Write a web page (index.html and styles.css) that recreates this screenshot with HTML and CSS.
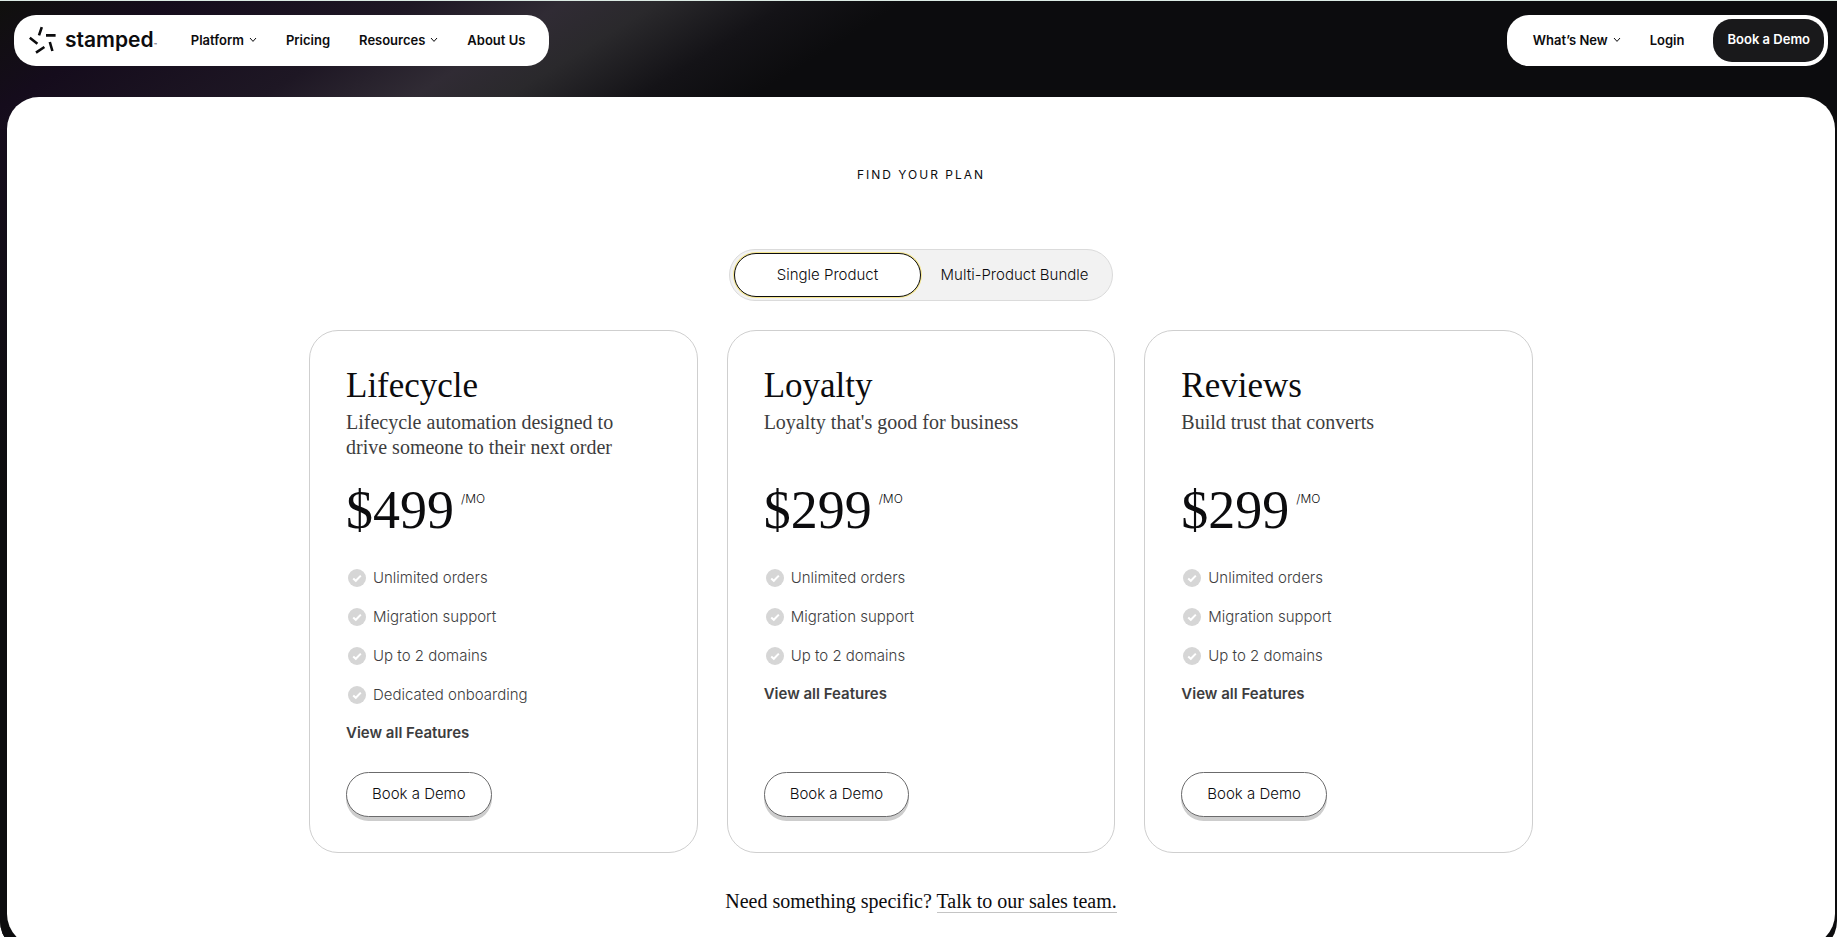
FILE: index.html
```
<!DOCTYPE html>
<html lang="en">
<head>
    <meta charset="utf-8">
    <title>Stamped Pricing</title>
    <link rel="stylesheet" href="styles.css">
</head>
<body>
    <div class="page">
        <header class="header">
            <nav class="nav nav-main">
                <a href="#" class="logo">
                    <svg class="logo-mark" viewBox="0 0 28 28" aria-hidden="true">
                        <path d="M12.8 1.2 L10 9.4 M17 9.4 H26.6 M0.8 11.8 L8.4 17.8 M20.8 16 L23.4 25 M7 26.6 L15.4 21" />
                    </svg>
                    <span class="logo-text">stamped<span class="logo-tm">&trade;</span></span>
                </a>
                <a href="#" class="nav-link">Platform
                    <svg class="chevron" viewBox="0 0 8 6" aria-hidden="true"><path d="M1 1 L4 4.4 L7 1" /></svg>
                </a>
                <a href="#" class="nav-link">Pricing</a>
                <a href="#" class="nav-link">Resources
                    <svg class="chevron" viewBox="0 0 8 6" aria-hidden="true"><path d="M1 1 L4 4.4 L7 1" /></svg>
                </a>
                <a href="#" class="nav-link">About Us</a>
            </nav>
            <nav class="nav nav-side">
                <a href="#" class="nav-link">What’s New
                    <svg class="chevron" viewBox="0 0 8 6" aria-hidden="true"><path d="M1 1 L4 4.4 L7 1" /></svg>
                </a>
                <a href="#" class="nav-link">Login</a>
                <a href="#" class="nav-cta">Book a Demo</a>
            </nav>
        </header>

        <main class="panel">
            <p class="eyebrow">Find your plan</p>

            <div class="toggle">
                <button type="button" class="toggle-btn active">Single Product</button>
                <button type="button" class="toggle-btn">Multi-Product Bundle</button>
            </div>

            <div class="cards">
                <section class="card">
                    <h2 class="card-title">Lifecycle</h2>
                    <p class="card-text">Lifecycle automation designed to drive someone to their next order</p>
                    <p class="price">$499<span class="per">/MO</span></p>
                    <ul class="features">
                        <li><svg class="check" viewBox="0 0 18 18" aria-hidden="true"><circle cx="9" cy="9" r="9" /><path d="M5.2 9.4 L7.8 11.8 L12.8 6.6" /></svg>Unlimited orders</li>
                        <li><svg class="check" viewBox="0 0 18 18" aria-hidden="true"><circle cx="9" cy="9" r="9" /><path d="M5.2 9.4 L7.8 11.8 L12.8 6.6" /></svg>Migration support</li>
                        <li><svg class="check" viewBox="0 0 18 18" aria-hidden="true"><circle cx="9" cy="9" r="9" /><path d="M5.2 9.4 L7.8 11.8 L12.8 6.6" /></svg>Up to 2 domains</li>
                        <li><svg class="check" viewBox="0 0 18 18" aria-hidden="true"><circle cx="9" cy="9" r="9" /><path d="M5.2 9.4 L7.8 11.8 L12.8 6.6" /></svg>Dedicated onboarding</li>
                    </ul>
                    <a href="#" class="view-all">View all Features</a>
                    <button type="button" class="demo-btn">Book a Demo</button>
                </section>

                <section class="card">
                    <h2 class="card-title">Loyalty</h2>
                    <p class="card-text">Loyalty that's good for business</p>
                    <p class="price">$299<span class="per">/MO</span></p>
                    <ul class="features">
                        <li><svg class="check" viewBox="0 0 18 18" aria-hidden="true"><circle cx="9" cy="9" r="9" /><path d="M5.2 9.4 L7.8 11.8 L12.8 6.6" /></svg>Unlimited orders</li>
                        <li><svg class="check" viewBox="0 0 18 18" aria-hidden="true"><circle cx="9" cy="9" r="9" /><path d="M5.2 9.4 L7.8 11.8 L12.8 6.6" /></svg>Migration support</li>
                        <li><svg class="check" viewBox="0 0 18 18" aria-hidden="true"><circle cx="9" cy="9" r="9" /><path d="M5.2 9.4 L7.8 11.8 L12.8 6.6" /></svg>Up to 2 domains</li>
                    </ul>
                    <a href="#" class="view-all">View all Features</a>
                    <button type="button" class="demo-btn">Book a Demo</button>
                </section>

                <section class="card">
                    <h2 class="card-title">Reviews</h2>
                    <p class="card-text">Build trust that converts</p>
                    <p class="price">$299<span class="per">/MO</span></p>
                    <ul class="features">
                        <li><svg class="check" viewBox="0 0 18 18" aria-hidden="true"><circle cx="9" cy="9" r="9" /><path d="M5.2 9.4 L7.8 11.8 L12.8 6.6" /></svg>Unlimited orders</li>
                        <li><svg class="check" viewBox="0 0 18 18" aria-hidden="true"><circle cx="9" cy="9" r="9" /><path d="M5.2 9.4 L7.8 11.8 L12.8 6.6" /></svg>Migration support</li>
                        <li><svg class="check" viewBox="0 0 18 18" aria-hidden="true"><circle cx="9" cy="9" r="9" /><path d="M5.2 9.4 L7.8 11.8 L12.8 6.6" /></svg>Up to 2 domains</li>
                    </ul>
                    <a href="#" class="view-all">View all Features</a>
                    <button type="button" class="demo-btn">Book a Demo</button>
                </section>
            </div>

            <p class="contact">Need something specific? <a href="#" class="contact-link">Talk to our sales team.</a></p>
        </main>
    </div>
</body>
</html>
```
FILE: styles.css
```
* {
    box-sizing: border-box;
}

body {
    margin: 0;
    background: #fff;
    color: #0c0c0e;
    font-family: Inter, "Open Sans", sans-serif;
    font-size: 15px;
}

a {
    color: inherit;
    text-decoration: none;
}

h2, p, ul {
    margin: 0;
    padding: 0;
    font-weight: 400;
}

button {
    font: inherit;
    color: inherit;
    cursor: pointer;
}

.page {
    padding: 14px 2px 7px 7px;
    border-top: 1px solid #dcebe4;
    border-radius: 0 0 32px 32px;
    background:
        linear-gradient(148deg, #10100d, #150c1c 90px, #1e1724 220px, #302b34 300px, #2a292c 350px, #141317 420px, #0c0c0e 480px) 0 0 / 960px 128px no-repeat,
        linear-gradient(#150c1c 120px, #0c0c0e 500px) 0 0 / 40px 100% no-repeat,
        #0c0c0e;
}

/* header */
.header {
    display: flex;
    justify-content: space-between;
    padding: 0 7px;
    margin-bottom: 31px;
}

.nav {
    display: flex;
    align-items: center;
    height: 51px;
    background: #fff;
    border-radius: 22px;
    font-size: 13px;
    font-weight: 600;
}

.nav-main {
    gap: 29px;
    padding: 0 24px 2px 15px;
}

.nav-side {
    gap: 29px;
    padding: 0 4px 0 26px;
}

.nav-link {
    display: flex;
    align-items: center;
    gap: 5px;
}

.nav-side .nav-link {
    padding-bottom: 2px;
}

.chevron {
    width: 8px;
    height: 6px;
    fill: none;
    stroke: #0c0c0e;
}

.logo {
    display: flex;
    align-items: center;
    margin-right: 5px;
}

.logo-mark {
    width: 28px;
    height: 28px;
    margin-right: 8px;
    fill: none;
    stroke: #0c0c0e;
    stroke-width: 2.6;
}

.logo-text {
    font-size: 21px;
}

.logo-tm {
    font-size: 5px;
    color: #444;
}

.nav-cta {
    padding: 0 14px 2px;
    line-height: 41px;
    border-radius: 19px;
    background: #19191b;
    color: #fff;
}

/* pricing panel */
.panel {
    display: flex;
    flex-direction: column;
    align-items: center;
    padding: 70px 24px 32px;
    border-radius: 32px;
    background: #fff;
}

.eyebrow {
    margin-bottom: 66px;
    font-size: 12px;
    line-height: 16px;
    letter-spacing: 2px;
    text-transform: uppercase;
}

.toggle {
    display: flex;
    width: 384px;
    margin-bottom: 29px;
    padding: 3px 4px;
    border: 1px solid #dbdbdb;
    border-radius: 26px;
    background: #f2f2f2;
}

.toggle-btn {
    flex: 1;
    height: 44px;
    padding: 0 0 2px;
    border: 1px solid transparent;
    border-radius: 22px;
    background: none;
    font-weight: 300;
    white-space: nowrap;
}

.toggle-btn.active {
    border-color: #0c0c0e;
    background: #fff;
    box-shadow: 0 0 0 1px #f6e78f;
}

.cards {
    display: grid;
    grid-template-columns: repeat(3, 1fr);
    gap: 29px;
    width: 100%;
    max-width: 1224px;
}

.card {
    display: flex;
    flex-direction: column;
    align-items: flex-start;
    padding: 33px 36px 35px;
    border: 1px solid #cfcfcf;
    border-radius: 29px;
}

.card-title {
    font-family: "Liberation Serif", serif;
    font-size: 35px;
    line-height: 44px;
}

.card-text {
    max-width: 300px;
    min-height: 50px;
    margin: 2px 0 22px;
    font-family: "Liberation Serif", serif;
    font-size: 20px;
    line-height: 25px;
    color: #3d3d3e;
}

.price {
    display: flex;
    gap: 7px;
    margin-bottom: 20px;
    font-family: "Liberation Serif", serif;
    font-size: 54px;
    line-height: 56px;
}

.per {
    padding-top: 9px;
    font-family: Inter, "Open Sans", sans-serif;
    font-size: 12px;
    font-weight: 300;
    line-height: 16px;
}

.features {
    list-style: none;
    font-weight: 300;
    color: #3d3d3e;
}

.features li {
    display: flex;
    align-items: center;
    gap: 7px;
    height: 39px;
    padding-left: 2px;
}

.check {
    width: 18px;
    height: 18px;
    fill: #d6d6d6;
}

.check path {
    fill: none;
    stroke: #fff;
    stroke-width: 2;
}

.view-all {
    margin: 8px 0 28px;
    font-weight: 600;
    line-height: 22px;
    color: #3d3d3e;
}

.demo-btn {
    height: 45px;
    margin-top: auto;
    padding: 0 25px 2px;
    border: 1px solid #6b6b6c;
    border-radius: 23px;
    background: #fff;
    box-shadow: 0 4px 0 #cdcdcd;
    font-weight: 300;
}

.contact {
    margin-top: 36px;
    font-family: "Liberation Serif", serif;
    font-size: 20px;
    line-height: 25px;
}

.contact-link {
    border-bottom: 1px solid #c4c4c4;
}
```
